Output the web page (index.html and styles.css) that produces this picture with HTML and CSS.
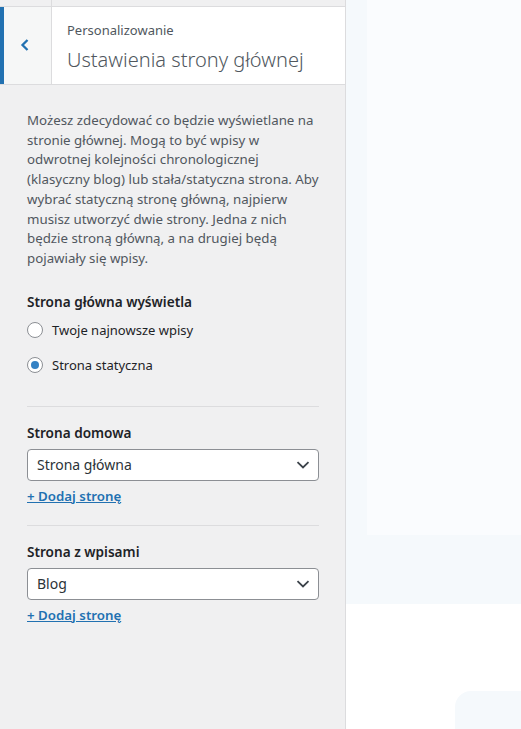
FILE: index.html
```html
<!DOCTYPE html>
<html lang="pl">
<head>
<meta charset="utf-8">
<title>Ustawienia strony głównej</title>
<link rel="stylesheet" href="styles.css">
</head>
<body>
<div class="layout">
  <aside class="sidebar">
    <div class="topstrip"><span class="topstrip-back"></span></div>
    <header class="section-head">
      <button class="back" aria-label="Wróć">
        <svg width="10" height="12" viewBox="0 0 10 12"><path d="M7.5 1 L2.5 6 L7.5 11" fill="none" stroke="#2271b1" stroke-width="2.3"/></svg>
      </button>
      <div class="titles">
        <span class="action">Personalizowanie</span>
        <h3 class="title">Ustawienia strony głównej</h3>
      </div>
    </header>
    <div class="content">
      <p class="description">Możesz zdecydować co będzie wyświetlane na stronie głównej. Mogą to być wpisy w odwrotnej kolejności chronologicznej (klasyczny blog) lub stała/statyczna strona. Aby wybrać statyczną stronę główną, najpierw musisz utworzyć dwie strony. Jedna z nich będzie stroną główną, a na drugiej będą pojawiały się wpisy.</p>

      <div class="control">
        <span class="control-title">Strona główna wyświetla</span>
        <label class="radio"><span class="radio-dot"></span>Twoje najnowsze wpisy</label>
        <label class="radio"><span class="radio-dot checked"></span>Strona statyczna</label>
      </div>

      <div class="control bordered">
        <span class="control-title">Strona domowa</span>
        <div class="select"><span>Strona główna</span>
          <svg width="14" height="8" viewBox="0 0 14 8"><path d="M1.5 1.2 L7 6.5 L12.5 1.2" fill="none" stroke="#3c434a" stroke-width="1.8"/></svg>
        </div>
        <a class="add-link" href="#">+ Dodaj stronę</a>
      </div>

      <div class="control bordered">
        <span class="control-title">Strona z wpisami</span>
        <div class="select"><span>Blog</span>
          <svg width="14" height="8" viewBox="0 0 14 8"><path d="M1.5 1.2 L7 6.5 L12.5 1.2" fill="none" stroke="#3c434a" stroke-width="1.8"/></svg>
        </div>
        <a class="add-link" href="#">+ Dodaj stronę</a>
      </div>
    </div>
  </aside>
  <main class="preview">
    <div class="preview-hero"><div class="preview-inner"></div></div>
    <div class="preview-lower"><div class="preview-card"></div></div>
  </main>
</div>
</body>
</html>
```

FILE: styles.css
```css
* { box-sizing: border-box; }
html, body { margin: 0; padding: 0; height: 100%; }
body {
  font-family: "Noto Sans", "Open Sans", sans-serif;
  font-size: 13px;
  color: #1d2327;
  background: #fff;
  overflow: hidden;
}
.layout {
  display: flex;
  height: 729px;
}
.sidebar {
  width: 346px;
  flex: none;
  background: #f0f0f1;
  border-right: 1px solid #dcdcde;
  display: flex;
  flex-direction: column;
}
.topstrip {
  height: 6px;
  display: flex;
}
.topstrip-back {
  width: 52px;
  border-right: 1px solid #dcdcde;
}
.section-head {
  display: flex;
  height: 79px;
  background: #fff;
  border-top: 1px solid #dcdcde;
  border-bottom: 1px solid #dcdcde;
}
.back {
  width: 52px;
  flex: none;
  margin: 0;
  background: #f6f7f7;
  border: 0;
  border-left: 4px solid #2271b1;
  border-right: 1px solid #dcdcde;
  display: flex;
  align-items: center;
  justify-content: flex-start;
  padding: 0 0 0 16px;
}
.back svg { display: block; margin-top: -2px; }
.titles {
  display: flex;
  flex-direction: column;
  padding: 13px 0 0 15px;
}
.action {
  font-size: 13px;
  line-height: 20px;
  color: #50575e;
}
.title {
  margin: 0;
  margin-top: 8px;
  font-size: 20px;
  line-height: 24px;
  font-weight: 300;
  color: #50575e;
}
.content {
  padding: 26px 26px 0 27px;
}
.description {
  margin: 0 0 23px;
  font-size: 13.3px;
  line-height: 19.7px;
  color: #50575e;
}
.control {
  display: flex;
  flex-direction: column;
  align-items: flex-start;
  padding-bottom: 18px;
}
.control.bordered {
  border-top: 1px solid #dcdcde;
  padding-top: 16px;
  padding-bottom: 19px;
}
.control-title {
  font-size: 13.6px;
  font-weight: 600;
  line-height: 20px;
  color: #1d2327;
  margin-bottom: 6px;
}
.radio {
  display: flex;
  align-items: center;
  gap: 9px;
  font-size: 13px;
  line-height: 20px;
  color: #1d2327;
  height: 20px;
  margin-top: 2px;
  margin-bottom: 13px;
}
.radio-dot {
  width: 16px;
  height: 16px;
  border: 1px solid #8c8f94;
  border-radius: 50%;
  background: #fff;
  display: flex;
  align-items: center;
  justify-content: center;
}
.radio-dot.checked::after {
  content: "";
  width: 8px;
  height: 8px;
  border-radius: 50%;
  background: #3582c4;
}
.select {
  align-self: stretch;
  height: 32px;
  background: #fff;
  border: 1px solid #8c8f94;
  border-radius: 4px;
  display: flex;
  align-items: center;
  justify-content: space-between;
  padding: 0 8px 0 9px;
  font-size: 14px;
  color: #2c3338;
}
.select svg { display: block; }
.add-link {
  margin-top: 5px;
  font-size: 13.3px;
  font-weight: 600;
  line-height: 20px;
  color: #2271b1;
  text-decoration: underline;
}
.preview {
  flex: 1;
  display: flex;
  flex-direction: column;
}
.preview-hero {
  height: 604px;
  background: #f5f9fc;
  padding-left: 21px;
}
.preview-inner {
  height: 535px;
  background: #fafcfe;
}
.preview-lower {
  flex: 1;
  background: #fff;
  padding: 87px 0 0 109px;
  overflow: hidden;
}
.preview-card {
  height: 80px;
  background: #f5f9fc;
  border-radius: 16px 0 0 0;
}
```
